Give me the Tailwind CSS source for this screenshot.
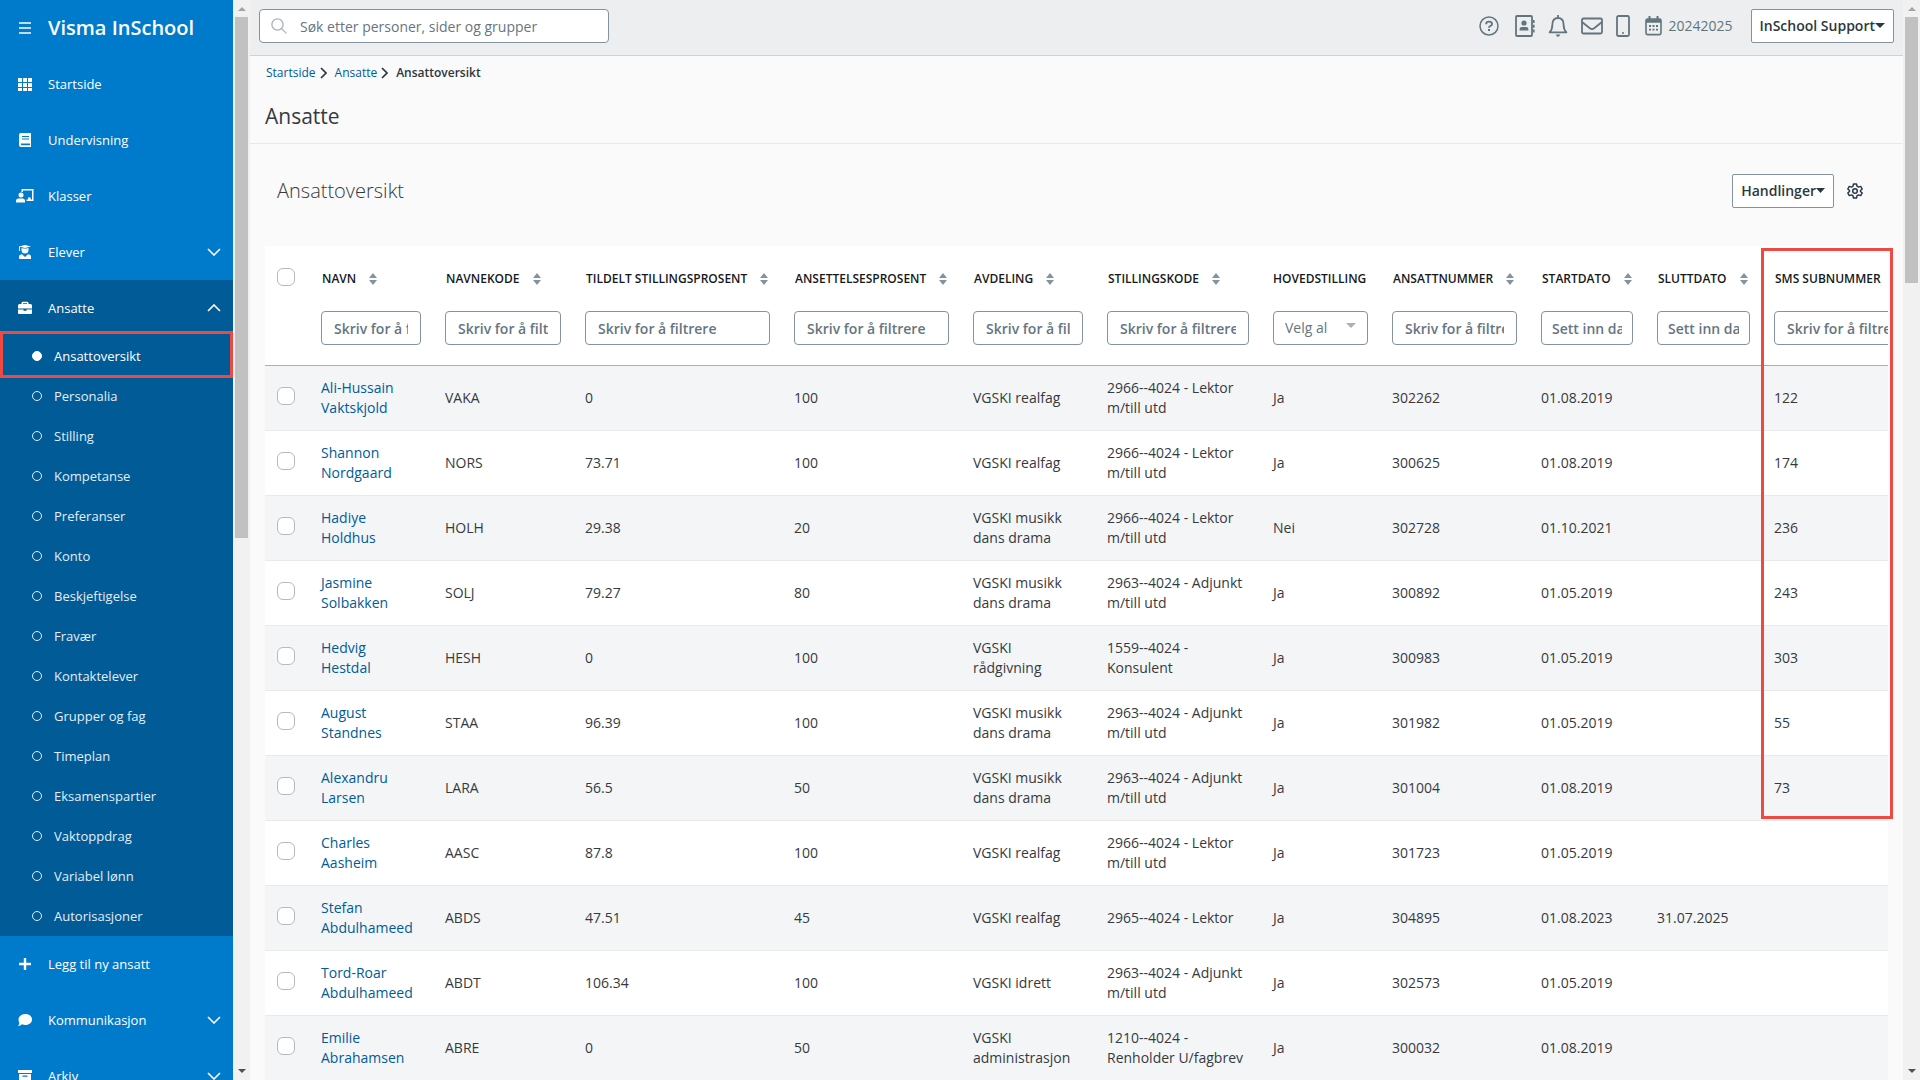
<!DOCTYPE html>
<html lang="no">
<head>
  <meta charset="UTF-8">
  <title>Ansattoversikt - Visma InSchool</title>
  <script src="https://cdn.jsdelivr.net/npm/@tailwindcss/browser@4"></script>
</head>
<body class="h-screen overflow-hidden flex bg-[#fafafa] text-[#363a3e] text-sm font-['Open_Sans','Noto_Sans',sans-serif]">

  <!-- Sidebar -->
  <nav class="w-[233px] shrink-0 h-screen overflow-hidden bg-[#007aca] text-white text-[13px] font-medium">
    <div class="h-14 pl-[18px] flex items-center gap-4">
      <button aria-label="Meny" class="w-3.5"><svg class="w-3.5 h-3.5" viewBox="0 0 14 14" stroke="currentColor" stroke-width="1.6"><path d="M1 2h12M1 7h12M1 12h12"/></svg></button>
      <span class="text-xl font-semibold">Visma InSchool</span>
    </div>
    <div id="menu-top"></div>
    <ul id="submenu" class="bg-[#005b97]"></ul>
    <div id="menu-bottom"></div>
  </nav>

  <!-- Sidebar scrollbar -->
  <div class="w-[17px] shrink-0 bg-[#f1f1f1] flex flex-col items-center justify-between py-1.5">
    <div class="flex flex-col items-center gap-[6px]">
      <svg class="w-2 h-[5px]" viewBox="0 0 8 5"><path d="M0 5L4 1L8 5z" fill="#a3a3a3"/></svg>
      <div class="w-[13px] h-[521px] bg-[#c1c1c1]"></div>
    </div>
    <svg class="w-2 h-[5px]" viewBox="0 0 8 5"><path d="M0 0L4 4L8 0z" fill="#505050"/></svg>
  </div>

  <main class="flex-1 min-w-0">
    <header class="h-14 px-[9px] flex items-center justify-between bg-[#edeef0] border-b border-[#cfd2d4]">
      <label class="relative -mt-1">
        <svg class="absolute left-3 top-[9px] w-4 h-4" viewBox="0 0 16 16" fill="none" stroke="#a9b2b8" stroke-width="1.3"><circle cx="6.5" cy="6.5" r="5.6"/><path d="M10.6 10.6L15.4 15.4"/></svg>
        <input type="text" aria-label="Søk" placeholder="Søk etter personer, sider og grupper" class="w-[350px] h-[34px] pt-0.5 pl-10 pr-3 bg-white border border-[#8493a0] rounded placeholder:text-[#66757f]">
      </label>
      <div class="-mt-1 flex items-center text-[#62757f]">
        <button aria-label="Hjelp" class="mr-4"><svg class="w-5 h-5" viewBox="0 0 20 20" fill="none" stroke="currentColor" stroke-width="1.5"><circle cx="10" cy="10" r="9"/><path d="M7.2 8.2V7.8Q7.2 5.6 10 5.6Q13 5.6 13 7.9Q13 9.2 11.3 10Q10 10.6 10 11.8" stroke-width="1.9"/><rect x="9" y="13" width="2" height="2" fill="currentColor" stroke="none"/></svg></button>
        <button aria-label="Kontakter" class="mr-[13px]"><svg class="w-5 h-[22px]" viewBox="0 0 20 22" fill="none" stroke="currentColor" stroke-width="1.8"><rect x="1" y="1" width="16" height="20" rx="1"/><path d="M18.8 5v3M18.8 9.8v3M18.8 14.6v3" stroke-width="1.6"/><circle cx="9" cy="8" r="2.6" fill="currentColor" stroke="none"/><path d="M4.6 15.6V14Q4.6 12 6.8 12H11.2Q13.4 12 13.4 14V15.6z" fill="currentColor" stroke="none"/></svg></button>
        <button aria-label="Varsler" class="mr-[13px]"><svg class="w-5 h-[22px]" viewBox="0 0 20 22" fill="none" stroke="currentColor" stroke-width="1.8"><path d="M10 0v3M1.6 17.4H18.4Q15.6 14.6 15.6 9.4Q15.6 3 10 3Q4.4 3 4.4 9.4Q4.4 14.6 1.6 17.4z" stroke-linejoin="round"/><path d="M7.8 19.4Q8.4 21.8 10 21.8Q11.600 21.800 12.200 19.400z" fill="currentColor" stroke="none"/></svg></button>
        <button aria-label="Meldinger" class="mr-[13px]"><svg class="w-[22px] h-[22px]" viewBox="0 0 22 22" fill="none" stroke="currentColor" stroke-width="1.8"><rect x="1" y="3.5" width="20" height="15" rx="1.5"/><path d="M1 7L9.2 13.4Q11 14.6 12.8 13.4L21 7"/></svg></button>
        <button aria-label="Mobil" class="mr-[15px]"><svg class="w-3.5 h-[22px]" viewBox="0 0 14 22" fill="none" stroke="currentColor" stroke-width="1.8"><rect x="1" y="1" width="12" height="20" rx="1.5"/><circle cx="7" cy="18" r="1" fill="currentColor" stroke="none"/></svg></button>
        <button class="mr-[18px] flex items-center gap-1.5 font-medium"><svg class="w-[17px] h-5" viewBox="0 0 17 20" fill="none" stroke="currentColor" stroke-width="1.6"><rect x="1" y="3" width="15" height="15.6" rx="1.5"/><path d="M1 5h15" stroke-width="3.5"/><path d="M4.5 0v4M12.5 0v4" stroke-width="2"/><path d="M4 10h2M7.5 10h2M11 10h2M4 13.6h2M7.5 13.6h2M11 13.6h2" stroke-width="1.8"/></svg>20242025</button>
        <button class="h-[34px] px-2 flex items-center bg-white border border-[#8493a0] rounded-xs text-[#2c3840] font-semibold">InSchool Support<svg class="w-2.5 h-[5px]" viewBox="0 0 10 5"><path d="M0 0H10L5 5z" fill="currentColor"/></svg></button>
      </div>
    </header>

    <section class="h-[88px] px-[15px] border-b border-[#e8e9ea]">
      <nav class="pt-2 pl-px flex items-center text-xs leading-[18px] text-[#2c3840]">
        <a href="#" class="text-[#005b97]">Startside</a>
        <svg class="w-[7px] h-3 ml-1 mr-2" viewBox="0 0 7 12" fill="none" stroke="currentColor" stroke-width="1.7"><path d="M1 1L6 6L1 11"/></svg>
        <a href="#" class="text-[#005b97]">Ansatte</a>
        <svg class="w-[7px] h-3 ml-1 mr-2" viewBox="0 0 7 12" fill="none" stroke="currentColor" stroke-width="1.7"><path d="M1 1L6 6L1 11"/></svg>
        <span class="font-semibold">Ansattoversikt</span>
      </nav>
      <h1 class="mt-5 text-[21px] leading-7">Ansatte</h1>
    </section>

    <div class="h-[103px] pl-[27px] pr-10 -mt-px pb-2 flex items-center justify-between">
      <h2 class="text-xl font-light">Ansattoversikt</h2>
      <div class="flex items-center gap-[13px] text-[#2c3840]">
        <button class="h-[34px] px-2 flex items-center bg-white border border-[#8493a0] rounded-xs font-semibold">Handlinger<svg class="w-[9px] h-[5px]" viewBox="0 0 9 5"><path d="M0 0H9L4.500 5z" fill="currentColor"/></svg></button>
        <button aria-label="Innstillinger"><svg class="w-4 h-4" viewBox="0 0 16 16" fill="none" stroke="currentColor" stroke-width="1.5" stroke-linejoin="round"><path d="M6.500 1h3l.5 2.200 1.500.9 2.200-.7 1.500 2.600-1.700 1.500v1l1.700 1.500-1.500 2.600-2.200-.7-1.500.9-.5 2.200h-3L6 12.800l-1.500-.9-2.200.7L.8 10l1.700-1.500v-1L.8 6l1.500-2.600 2.200.7L6 3.200z"/><circle cx="8" cy="8" r="2.300"/></svg></button>
      </div>
    </div>

    <div class="relative mx-[15px]">
      <div class="overflow-hidden">
        <table class="table-fixed w-[1697px] bg-white text-left">
          <colgroup>
            <col class="w-11"><col class="w-[124px]"><col class="w-[140px]"><col class="w-[209px]"><col class="w-[179px]"><col class="w-[134px]"><col class="w-[166px]"><col class="w-[119px]"><col class="w-[149px]"><col class="w-[116px]"><col class="w-[117px]"><col class="w-[200px]">
          </colgroup>
          <thead>
            <tr id="head-row" class="h-[119px] border-b border-[#a5b0b8] align-top text-xs text-[#16191c]"></tr>
          </thead>
          <tbody id="rows"></tbody>
        </table>
      </div>
      <!-- Highlight around the SMS column -->
      <div class="absolute top-0.5 -right-[5px] w-[132px] h-[571px] border-3 border-[#ec4a43]"></div>
    </div>
  </main>

  <!-- Page scrollbar -->
  <div class="w-[17px] shrink-0 bg-[#f1f1f1] flex flex-col items-center justify-between py-1.5">
    <div class="flex flex-col items-center gap-[6px]">
      <svg class="w-2 h-[5px]" viewBox="0 0 8 5"><path d="M0 5L4 1L8 5z" fill="#a3a3a3"/></svg>
      <div class="w-[13px] h-[266px] bg-[#c1c1c1]"></div>
    </div>
    <svg class="w-2 h-[5px]" viewBox="0 0 8 5"><path d="M0 0L4 4L8 0z" fill="#505050"/></svg>
  </div>

  <script>
    const icons = {
      grid: '<path d="M0 1h4v4H0zM5 1h4v4H5zM10 1h4v4h-4zM0 6h4v4H0zM5 6h4v4H5zM10 6h4v4h-4zM0 11h4v3H0zM5 11h4v3H5zM10 11h4v3h-4z"/>',
      book: '<path fill-rule="evenodd" d="M3 0H13V14H3Q1 14 1 12V2Q1 0 3 0zM4 3v1h7V3zM4 5.500v1h7v-1zM3 10.600v1.600h9v-1.600z"/>',
      board: '<path d="M3.500 0H15.500V12H8.500V10.400H10V8.600H12.600V10.400H14V1.600H5V3H3.500z"/><circle cx="3" cy="6" r="2.500"/><path d="M-2 13.600V12Q-2 9.400.6 9.400H4.600Q7 9.400 7 12V13.600z"/>',
      student: '<path d="M7 0L13 1.500L7 3L1 1.500zM1 1.500h1V6H1z"/><path d="M3.500 3Q7 4 10.500 3V5Q10.500 8.500 7 8.500Q3.500 8.500 3.500 5z"/><path d="M1 14V12Q1 9.500 4 9.300L7 12L10 9.300Q13 9.500 13 12V14z"/>',
      case: '<path fill-rule="evenodd" d="M3.500 3V2Q3.500.7 5 .7H9Q10.500.7 10.500 2V3H12.500Q14 3 14 4.500V7.500H0V4.500Q0 3 1.500 3zM5 3H9V2.200H5zM0 8.500H5.500V9.800H8.500V8.500H14V12Q14 13 13 13H1Q0 13 0 12z"/>',
      plus: '<path d="M5.800 1h2.400v4.800H13v2.400H8.200V13H5.800V8.200H1V5.800h4.800z"/>',
      chat: '<path d="M7.500 1C11 1 14 3.300 14 6.500S11 12 7.500 12Q5.500 12 4 11.200Q2.500 12.800 0 13Q1.300 11.500 1.300 9.800Q.500 8.300.500 6.500C.500 3.300 4 1 7.500 1z"/>',
      archive: '<path fill-rule="evenodd" d="M0 1H14V4H0zM1 5H13V13H1zM4.500 6.500v1.200h5V6.500z"/>'
    };

    function chevron(dir) {
      const d = dir === 'up' ? 'M1 7L7 1L13 7' : 'M1 1L7 7L13 1';
      return `<svg class="w-3.5 h-2 ml-auto" viewBox="0 0 14 8" fill="none" stroke="currentColor" stroke-width="1.6"><path d="${d}"/></svg>`;
    }

    function menuItem([label, icon, dir]) {
      const bg = dir === 'up' ? 'bg-[#005b97]' : '';
      return `<a href="#" class="h-14 pl-[18px] pr-3 flex items-center ${bg}"><svg class="w-3.5 h-3.5 mr-4 overflow-visible" viewBox="0 0 14 14" fill="currentColor">${icons[icon]}</svg>${label}${dir ? chevron(dir) : ''}</a>`;
    }

    const topItems = [['Startside', 'grid'], ['Undervisning', 'book'], ['Klasser', 'board'], ['Elever', 'student', 'down'], ['Ansatte', 'case', 'up']];
    const bottomItems = [['Legg til ny ansatt', 'plus'], ['Kommunikasjon', 'chat', 'down'], ['Arkiv', 'archive', 'down']];
    document.getElementById('menu-top').innerHTML = topItems.map(menuItem).join('');
    document.getElementById('menu-bottom').innerHTML = bottomItems.map(menuItem).join('');

    const sub = ['Ansattoversikt', 'Personalia', 'Stilling', 'Kompetanse', 'Preferanser', 'Konto', 'Beskjeftigelse', 'Fravær', 'Kontaktelever', 'Grupper og fag', 'Timeplan', 'Eksamenspartier', 'Vaktoppdrag', 'Variabel lønn', 'Autorisasjoner'];
    document.getElementById('submenu').innerHTML = sub.map((s, i) => `<li class="relative">
      <a href="#" class="h-10 pl-8 flex items-center gap-3 ${i ? 'text-[#e3eef6]' : 'text-white'}"><span class="w-2.5 h-2.5 rounded-full border ${i ? 'border-[#e3eef6]' : 'border-white bg-white'}"></span>${s}</a>
      ${i ? '' : '<div class="absolute inset-x-0 -top-[5px] h-[47px] border-3 border-[#ec4a43]"></div>'}
    </li>`).join('');

    // title, placeholder, sortable
    const cols = [
      ['NAVN', 'Skriv for å filtrere', true], ['NAVNEKODE', 'Skriv for å filtrere', true], ['TILDELT STILLINGSPROSENT', 'Skriv for å filtrere', true],
      ['ANSETTELSESPROSENT', 'Skriv for å filtrere', true], ['AVDELING', 'Skriv for å filtrere', true], ['STILLINGSKODE', 'Skriv for å filtrere', true],
      ['HOVEDSTILLING', 'select', false], ['ANSATTNUMMER', 'Skriv for å filtrere', true], ['STARTDATO', 'Sett inn dato', true],
      ['SLUTTDATO', 'Sett inn dato', true], ['SMS SUBNUMMER', 'Skriv for å filtrere', true]
    ];
    const sort = '<svg class="w-2 h-3 shrink-0" viewBox="0 0 8 12" fill="#8493a0"><path d="M0 5L4 0L8 5zM0 7L4 12L8 7z"/></svg>';
    const check = label => `<input type="checkbox" aria-label="${label}" class="block appearance-none w-[18px] h-[18px] bg-white border border-[#b3bac0] rounded-md">`;

    document.getElementById('head-row').innerHTML = `<th class="pl-3 pt-[22px]">${check('Velg alle')}</th>` + cols.map(([title, ph, sortable]) => {
      const field = ph === 'select'
        ? `<div class="relative"><select aria-label="${title}" class="w-full h-[34px] pl-[11px] pr-10 appearance-none bg-white border border-[#8493a0] rounded text-sm font-medium text-[#66757f]"><option>Velg alternativ</option></select><svg class="absolute right-3 top-3 w-2.5 h-[5px]" viewBox="0 0 10 5"><path d="M0 0H10L5 5z" fill="#a9b2b8"/></svg></div>`
        : `<input type="text" aria-label="${title}" placeholder="${ph}" class="block w-full h-[34px] ${ph[1] === 'e' ? 'px-2.5' : 'px-3'} bg-white border border-[#8493a0] rounded text-sm font-semibold placeholder:text-[#66757f]">`;
      return `<th class="px-3 pt-6 font-semibold"><div class="h-[18px] mb-[23px] flex items-center gap-[13px] whitespace-nowrap ${sortable ? 'pl-px' : ''}">${title}${sortable ? sort : ''}</div>${field}</th>`;
    }).join('');

    const data = [
      ['Ali-Hussain Vaktskjold', 'VAKA', '0', '100', 'VGSKI realfag', '2966--4024 - Lektor m/till utd', 'Ja', '302262', '01.08.2019', '', '122'],
      ['Shannon Nordgaard', 'NORS', '73.71', '100', 'VGSKI realfag', '2966--4024 - Lektor m/till utd', 'Ja', '300625', '01.08.2019', '', '174'],
      ['Hadiye Holdhus', 'HOLH', '29.38', '20', 'VGSKI musikk dans drama', '2966--4024 - Lektor m/till utd', 'Nei', '302728', '01.10.2021', '', '236'],
      ['Jasmine Solbakken', 'SOLJ', '79.27', '80', 'VGSKI musikk dans drama', '2963--4024 - Adjunkt m/till utd', 'Ja', '300892', '01.05.2019', '', '243'],
      ['Hedvig Hestdal', 'HESH', '0', '100', 'VGSKI rådgivning', '1559--4024 - Konsulent', 'Ja', '300983', '01.05.2019', '', '303'],
      ['August Standnes', 'STAA', '96.39', '100', 'VGSKI musikk dans drama', '2963--4024 - Adjunkt m/till utd', 'Ja', '301982', '01.05.2019', '', '55'],
      ['Alexandru Larsen', 'LARA', '56.5', '50', 'VGSKI musikk dans drama', '2963--4024 - Adjunkt m/till utd', 'Ja', '301004', '01.08.2019', '', '73'],
      ['Charles Aasheim', 'AASC', '87.8', '100', 'VGSKI realfag', '2966--4024 - Lektor m/till utd', 'Ja', '301723', '01.05.2019', '', ''],
      ['Stefan Abdulhameed', 'ABDS', '47.51', '45', 'VGSKI realfag', '2965--4024 - Lektor', 'Ja', '304895', '01.08.2023', '31.07.2025', ''],
      ['Tord-Roar Abdulhameed', 'ABDT', '106.34', '100', 'VGSKI idrett', '2963--4024 - Adjunkt m/till utd', 'Ja', '302573', '01.05.2019', '', ''],
      ['Emilie Abrahamsen', 'ABRE', '0', '50', 'VGSKI administrasjon', '1210--4024 - Renholder U/fagbrev', 'Ja', '300032', '01.08.2019', '', '']
    ];
    document.getElementById('rows').innerHTML = data.map(r => {
      const [first, last] = r[0].split(' ');
      return `<tr class="h-[65px] border-b border-[#e8eaec] odd:bg-[#f4f5f7]"><td class="pl-3 pb-1">${check(r[0])}</td><td class="px-3"><a href="#" class="text-[#005b97]">${first}<br>${last}</a></td>` +
        r.slice(1).map(v => `<td class="px-3">${v}</td>`).join('') + '</tr>';
    }).join('');
  </script>
</body>
</html>
